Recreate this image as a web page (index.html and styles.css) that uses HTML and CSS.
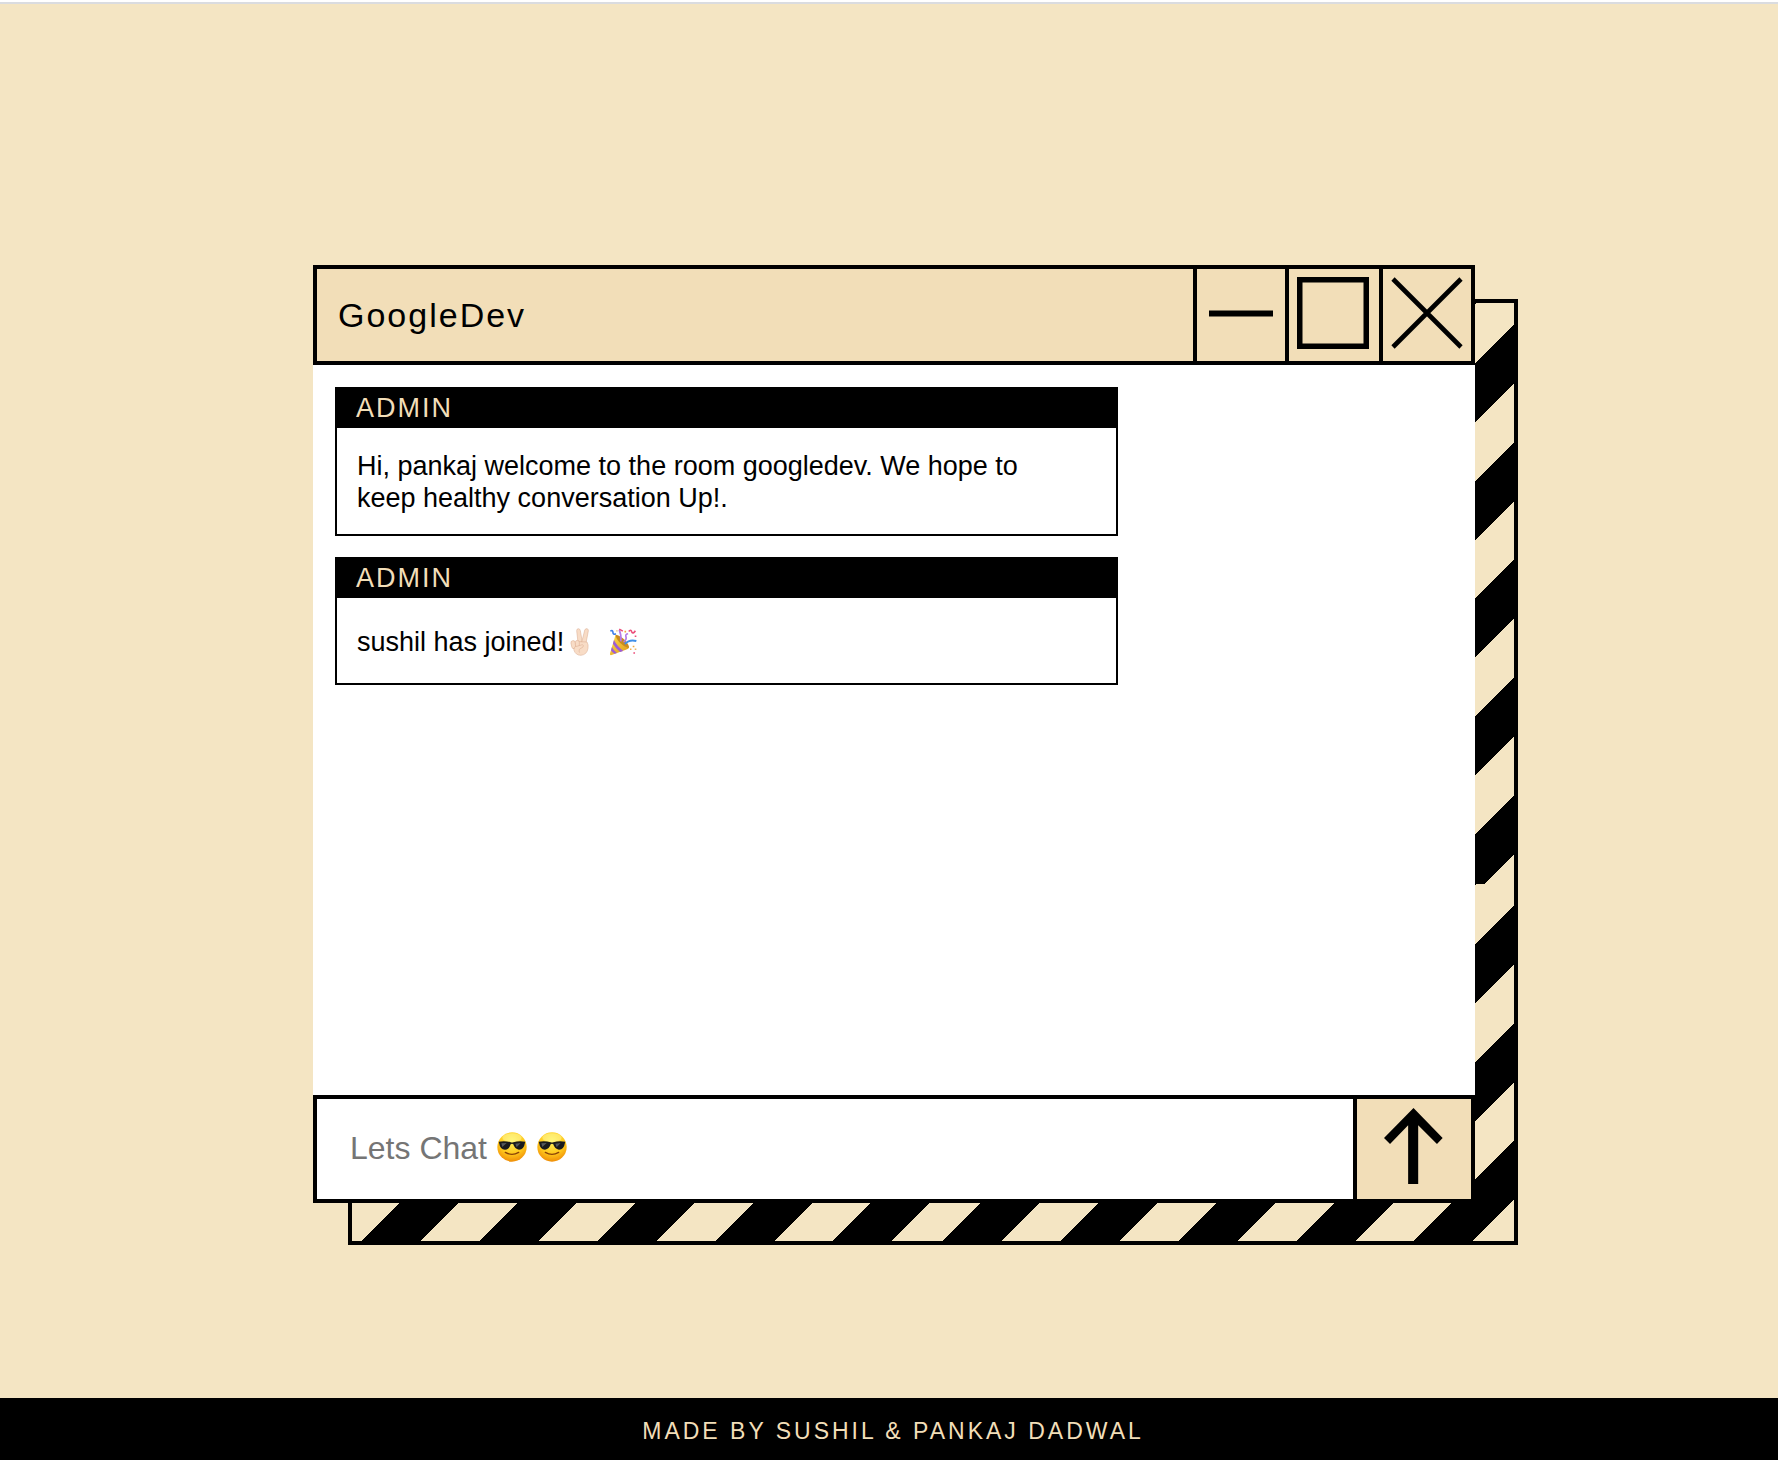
FILE: index.html
```html
<!DOCTYPE html>
<html lang="en">
<head>
<meta charset="utf-8">
<meta name="viewport" content="width=device-width, initial-scale=1">
<title>GoogleDev</title>
<link rel="stylesheet" href="styles.css">
</head>
<body>
<svg class="defs" aria-hidden="true">
  <defs>
    <radialGradient id="face" cx=".5" cy=".3" r=".72">
      <stop offset="0" stop-color="#fff35c"/>
      <stop offset=".6" stop-color="#ffc81c"/>
      <stop offset="1" stop-color="#ee8a06"/>
    </radialGradient>
    <linearGradient id="cone" x1="0" y1="0" x2="1" y2="1">
      <stop offset="0" stop-color="#ffdc4e"/>
      <stop offset="1" stop-color="#dc9a1c"/>
    </linearGradient>
    <symbol id="cool" viewBox="0 0 90 90">
      <circle cx="45" cy="45" r="44" fill="url(#face)"/>
      <ellipse cx="45" cy="17" rx="29" ry="13" fill="#fff9a0" opacity=".5"/>
      <path d="M25 61Q45 73 65 61" fill="none" stroke="#8a4308" stroke-width="4" stroke-linecap="round"/>
      <path d="M5 29Q24 25 41 31Q45 32 49 31Q66 25 85 29L83 36Q81 52 66 53Q53 52 49 37Q45 34 41 37Q37 52 24 53Q9 52 7 36Z" fill="#1b1b1d"/>
      <path d="M13 34L29 33L16 45ZM55 35L71 33L59 46Z" fill="#55585c"/>
    </symbol>
  </defs>
</svg>
<div class="top-edge"></div>
<main class="page">
  <section class="window" aria-label="Chat room">
    <header class="titlebar">
      <h1 class="room">GoogleDev</h1>
      <button class="control" type="button" aria-label="Minimize">
        <svg width="72" height="72" viewBox="0 0 72 72"><path d="M4 36.5H68" stroke="#000" stroke-width="6"/></svg>
      </button>
      <button class="control control-wide" type="button" aria-label="Maximize">
        <svg width="72" height="72" viewBox="0 0 72 72"><rect x="2.75" y="2.75" width="66.5" height="66.5" fill="none" stroke="#000" stroke-width="5.5"/></svg>
      </button>
      <button class="control" type="button" aria-label="Close">
        <svg width="72" height="72" viewBox="0 0 72 72"><path d="M2 2L70 70M70 2L2 70" stroke="#000" stroke-width="4.6"/></svg>
      </button>
    </header>
    <div class="log">
      <article class="message">
        <h2 class="sender">ADMIN</h2>
        <p class="text">Hi, pankaj welcome to the room googledev. We hope to keep healthy conversation Up!.</p>
      </article>
      <article class="message">
        <h2 class="sender">ADMIN</h2>
        <div class="text">
          <span>sushil has joined!</span>
          <svg class="peace" role="img" aria-label="Victory hand" width="20" height="28" viewBox="0 0 60 84">
            <g fill="#f8dcc6" stroke="#d9a98c" stroke-width="1.5">
              <path d="M20 8Q20 2 25 2Q30 2 31 8L37 42L24 44Z"/>
              <path d="M44 7Q46 1 51 2Q56 3 55 9L48 45L35 43Z"/>
              <path d="M10 48L24 41L51 42Q56 50 54 61Q51 80 33 82Q17 82 12 67Z"/>
              <rect x="4" y="38" width="13" height="24" rx="6" transform="rotate(-12 10 50)"/>
              <rect x="16" y="37" width="12" height="20" rx="6"/>
              <path d="M12 63Q12 53 24 54L37 50Q42 51 39 57L28 64Q26 70 29 74" />
            </g>
          </svg>
          <svg class="popper" role="img" aria-label="Party popper" width="29" height="28" viewBox="0 0 88 84">
            <path d="M20 20L60 55Q62 62 53 65L6 82Q2 82 3 77Z" fill="url(#cone)"/>
            <path d="M20 20Q34 22 48 36Q62 51 60 61Q47 58 34 45Q20 31 20 20Z" fill="#c98a20"/>
            <path d="M15 36Q23 53 43 69L34 72Q20 61 12 47ZM9 57Q14 68 24 75L17 78Q10 73 6 67Z" fill="#9b5bd8"/>
            <path d="M36 40Q38 20 31 5M44 42Q55 36 51 24Q50 18 58 17" fill="none" stroke="#b57be6" stroke-width="5"/>
            <path d="M48 48Q62 33 83 39" fill="none" stroke="#3f8fe8" stroke-width="6"/>
            <path d="M4 9Q12 5 12 13Q12 21 21 17" fill="none" stroke="#3f7fe8" stroke-width="5"/>
            <path d="M60 10Q66 2 69 11Q73 19 80 8M31 3L42 9" fill="none" stroke="#ec4f7b" stroke-width="5"/>
            <path d="M47 8h5v5h-5zM72 53h5v5h-5zM64 62h4v4h-4z" fill="#f3a83b"/>
            <path d="M74 73h5v5h-5zM78 22h5v5h-5z" fill="#ec4f7b"/>
            <path d="M78 62h5v4h-5zM22 6h4v4h-4z" fill="#e7b66b"/>
          </svg>
        </div>
      </article>
    </div>
    <form class="composer">
      <input class="entry" type="text" placeholder="Lets Chat" aria-label="Message">
      <span class="entry-emoji" aria-hidden="true">
        <svg width="30" height="30"><use href="#cool"/></svg>
        <svg width="30" height="30"><use href="#cool"/></svg>
      </span>
      <button class="send" type="button" aria-label="Send">
        <svg width="59" height="76" viewBox="192 143 176 226"><path d="M280 143L367 232L350 250L294 194V369H264V194L210 250L192 232Z"/></svg>
      </button>
    </form>
  </section>
</main>
<footer class="credits">MADE BY SUSHIL &amp; PANKAJ DADWAL</footer>
</body>
</html>
```
FILE: styles.css
```css
* {
  box-sizing: border-box;
}

body {
  display: flex;
  flex-direction: column;
  min-height: 100vh;
  margin: 0;
  background: #f4e5c3;
  color: #000;
  font-family: "Liberation Sans", Arial, sans-serif;
}

h1,
h2,
p {
  margin: 0;
  font-weight: 400;
}

svg {
  display: block;
  flex: none;
}

.defs {
  position: absolute;
  width: 0;
  height: 0;
}

.top-edge {
  height: 4px;
  background: #fff;
  border-bottom: 2px solid #dadce0;
}

.page {
  display: flex;
  flex: 1;
  justify-content: center;
  padding: 261px 40px 195px 50px;
}

.window {
  position: relative;
  isolation: isolate;
  display: flex;
  flex-direction: column;
  width: 100%;
  max-width: 1162px;
}

/* Striped slab that shows behind the window */
.window::before {
  content: "";
  position: absolute;
  z-index: -1;
  top: 34px;
  left: 35px;
  box-sizing: content-box;
  width: 100%;
  height: 100%;
  border: 4px solid #000;
  background: repeating-linear-gradient(-45deg, #f4e5c3 0 2.535%, #000 2.535% 7.605%, #f4e5c3 7.605% 10.14%);
  background-size: 50% 581px;
}

.titlebar {
  display: flex;
  height: 100px;
  border: 4px solid #000;
  background: #f2deb8;
}

.room {
  flex: 1;
  align-self: center;
  padding-left: 21px;
  font-size: 34px;
  line-height: 40px;
  letter-spacing: 2px;
}

.control,
.send {
  display: flex;
  align-items: center;
  justify-content: center;
  margin: 0;
  border: 0;
  border-left: 4px solid #000;
  background: #f2deb8;
}

.control {
  width: 92px;
  padding: 0 0 4px;
}

.control-wide {
  width: 94px;
  padding-right: 2px;
}

.log {
  display: flex;
  flex: 1;
  flex-direction: column;
  gap: 21px;
  padding: 22px;
  background: #fff;
}

.message {
  width: 70%;
  border: 2px solid #000;
}

.sender {
  padding: 3px 19px;
  background: #000;
  color: #f2deb8;
  font-size: 27px;
  line-height: 33px;
  letter-spacing: 2px;
}

.text {
  display: flex;
  align-items: center;
  min-height: 85px;
  padding: 22px 40px 20px 20px;
  font-size: 27px;
  line-height: 32px;
}

.peace {
  margin-left: 6px;
}

.popper {
  margin-left: 19px;
}

.composer {
  position: relative;
  display: flex;
  height: 108px;
  border: 4px solid #000;
  background: #fff;
}

.entry {
  flex: 1;
  min-width: 0;
  padding: 0 33px 2px;
  border: 0;
  outline: 0;
  background: none;
  font: 32px "Liberation Sans", Arial, sans-serif;
}

.entry::placeholder {
  color: #757575;
  opacity: 1;
}

.entry-emoji {
  position: absolute;
  top: 33px;
  left: 180px;
  display: flex;
  gap: 10px;
  pointer-events: none;
}

.entry:not(:placeholder-shown) + .entry-emoji {
  display: none;
}

.send {
  width: 118px;
  padding: 0 2px 7px 0;
}

.credits {
  padding: 20px 16px 16px 24px;
  background: #000;
  color: #f2deb8;
  font-size: 23px;
  line-height: 26px;
  letter-spacing: 3px;
  text-align: center;
}
```
